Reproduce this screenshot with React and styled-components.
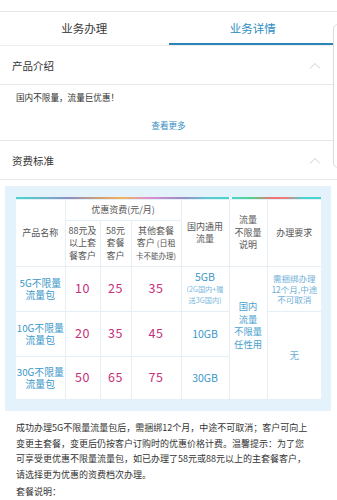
import React from "react";
import styled, { createGlobalStyle } from "styled-components";

const Global = createGlobalStyle`
  html, body { margin: 0; padding: 0; background: #fff; }
  body { font-family: "Noto Sans CJK SC", "Noto Sans", sans-serif; color: #333; }
  * { box-sizing: border-box; }
`;

const Page = styled.div`
  position: relative;
  width: 337px;
  min-height: 500px;
  overflow: hidden;
  background: #fff;
`;

const TopGap = styled.div`
  height: 12px;
  border-bottom: 1px solid #e6e6e6;
`;

const Tabs = styled.div`
  display: flex;
  height: 34px;
  border-bottom: 1px solid #ececec;
`;

const Tab = styled.div`
  flex: 1;
  display: flex;
  align-items: center;
  justify-content: center;
  font-size: 11.5px;
  color: ${(p) => (p.$active ? "#2f8dc2" : "#3a3a3a")};
  border-bottom: 2px solid ${(p) => (p.$active ? "#2c86b8" : "transparent")};
  padding-top: 1px;
`;

const SectionHead = styled.div`
  display: flex;
  align-items: center;
  justify-content: space-between;
  height: 39px;
  padding: 0 12px 0 12px;
  border-bottom: 1px solid #e8e8e8;
  font-size: 10.5px;
  color: #333;
`;

const Chevron = styled.svg`
  width: 12px;
  height: 7px;
  margin-right: 4px;
`;

const Intro = styled.div`
  border-bottom: 1px solid #e6e6e6;
  padding: 5px 16px 8px;
`;

const IntroText = styled.div`
  font-size: 8.6px;
  color: #333;
  line-height: 14px;
`;

const More = styled.div`
  text-align: center;
  font-size: 8.6px;
  color: #2f8dc2;
  margin-top: 14px;
  line-height: 14px;
`;

const BlueBox = styled.div`
  margin: 6px 6px 0 5px;
  background: #e4f2fc;
  padding: 11px 10px 11px 11px;
`;

const TopLine = styled.div`
  display: flex;
  height: 2px;
  background: #fff;
`;

const Seg = styled.div`
  height: 2px;
  width: ${(p) => p.$w}px;
  margin-left: ${(p) => p.$ml || 0}px;
  background: ${(p) => p.$bg};
`;

const Table = styled.table`
  width: 305px;
  border-collapse: collapse;
  table-layout: fixed;
  background: #fff;
`;

const Td = styled.td`
  border: 1px solid #e6eff5;
  text-align: center;
  vertical-align: middle;
  padding: 0 0 ${(p) => p.$pb || 0}px 0;
  font-size: ${(p) => p.$fs || 9}px;
  line-height: ${(p) => p.$lh || 12.5}px;
  color: ${(p) => p.$c || "#555"};
  height: ${(p) => (p.$h ? p.$h + "px" : "auto")};
  &:first-child { border-left: none; }
  &:last-child { border-right: none; }
`;

const Small = styled.span`
  font-size: ${(p) => p.$fs || 7.5}px;
  color: ${(p) => p.$c || "inherit"};
`;

const Price = styled.span`
  font-size: 12.5px;
  color: #c5307a;
  letter-spacing: 0.5px;
`;

const Para = styled.div`
  padding: 9px 28px 0 16px;
  font-size: 9px;
  line-height: 15.5px;
  color: #333;
`;

const ParaLine = styled.div`
  margin-top: ${(p) => p.$mt || 0}px;
`;

const Float = styled.div`
  position: absolute;
  left: 333px;
  top: 24px;
  width: 30px;
  height: 144px;
  border: 1px solid #dcdcdc;
  border-radius: 5px;
  background: #fff;
`;

const Up = () => (
  <Chevron viewBox="0 0 12 7">
    <path d="M1 6.5 L6 1.5 L11 6.5" fill="none" stroke="#cfcfcf" strokeWidth="1" />
  </Chevron>
);

export default function App() {
  return (
    <Page>
      <Global />
      <TopGap />
      <Tabs>
        <Tab>业务办理</Tab>
        <Tab $active>业务详情</Tab>
      </Tabs>
      <SectionHead>
        <span>产品介绍</span>
        <Up />
      </SectionHead>
      <Intro>
        <IntroText>国内不限量，流量巨优惠！</IntroText>
        <More>查看更多</More>
      </Intro>
      <SectionHead>
        <span>资费标准</span>
        <Up />
      </SectionHead>
      <BlueBox>
        <TopLine>
          <Seg
            $w={213}
            $bg="linear-gradient(90deg,#46d6cf 0%,#6fb3c8 14%,#8b90c0 25%,#d5a070 40%,#f2b45a 50%,#dc90d0 62%,#9a8ec4 78%,#5cc8d0 90%,#46d6cf 100%)"
          />
          <Seg
            $ml={3}
            $w={89}
            $bg="linear-gradient(90deg,#46d6cf 0%,#55d08a 22%,#ef7272 45%,#ef7a7a 60%,#46d6cf 80%,#46d6cf 100%)"
          />
        </TopLine>
        <Table>
          <colgroup>
            <col style={{ width: 49 }} />
            <col style={{ width: 35 }} />
            <col style={{ width: 31 }} />
            <col style={{ width: 50 }} />
            <col style={{ width: 48 }} />
            <col style={{ width: 38 }} />
            <col style={{ width: 54 }} />
          </colgroup>
          <tbody>
            <tr>
              <Td rowSpan={2}>产品名称</Td>
              <Td colSpan={3} $h={21}>优惠资费(元/月)</Td>
              <Td rowSpan={2}>国内通用<br />流量</Td>
              <Td rowSpan={2}>流量<br />不限量<br />说明</Td>
              <Td rowSpan={2}>办理要求</Td>
            </tr>
            <tr>
              <Td $h={46}>88元及<br />以上套<br />餐客户</Td>
              <Td>58元<br />套餐<br />客户</Td>
              <Td>其他套餐<br />客户 <Small $fs={8}>(日租</Small><br /><Small $fs={7.5}>卡不能办理)</Small></Td>
            </tr>
            <tr>
              <Td $h={45} $c="#3c97c9" $fs={9.8} $lh={12.5}>5G不限量<br />流量包</Td>
              <Td><Price>10</Price></Td>
              <Td><Price>25</Price></Td>
              <Td><Price>35</Price></Td>
              <Td $c="#3c97c9" $fs={10.5} $lh={10.5}>
                5GB<br />
                <Small $fs={7.2} $c="#7db8dc">(2G国内+赠<br />送3G国内)</Small>
              </Td>
              <Td rowSpan={3} $c="#4a9fd0" $fs={9.3} $lh={12.5} $pb={16}>国内<br />流量<br />不限量<br />任性用</Td>
              <Td $c="#6fb0d8" $fs={8.5} $lh={10.5}>需捆绑办理<br />12个月,中途<br />不可取消</Td>
            </tr>
            <tr>
              <Td $h={45} $c="#3c97c9" $fs={9.8} $lh={12.5}>10G不限量<br />流量包</Td>
              <Td><Price>20</Price></Td>
              <Td><Price>35</Price></Td>
              <Td><Price>45</Price></Td>
              <Td $c="#3c97c9" $fs={10.5}>10GB</Td>
              <Td rowSpan={2} $c="#6fb0d8" $fs={9.5}>无</Td>
            </tr>
            <tr>
              <Td $h={43} $c="#3c97c9" $fs={9.8} $lh={12.5}>30G不限量<br />流量包</Td>
              <Td><Price>50</Price></Td>
              <Td><Price>65</Price></Td>
              <Td><Price>75</Price></Td>
              <Td $c="#3c97c9" $fs={10.5}>30GB</Td>
            </tr>
          </tbody>
        </Table>
      </BlueBox>
      <Para>
        <ParaLine>成功办理5G不限量流量包后，需捆绑12个月，中途不可取消；客户可向上变更主套餐，变更后仍按客户订购时的优惠价格计费。温馨提示：为了您可享受更优惠不限量流量包，如已办理了58元或88元以上的主套餐客户，请选择更为优惠的资费档次办理。</ParaLine>
        <ParaLine $mt={2}>套餐说明：</ParaLine>
      </Para>
      <Float />
    </Page>
  );
}
